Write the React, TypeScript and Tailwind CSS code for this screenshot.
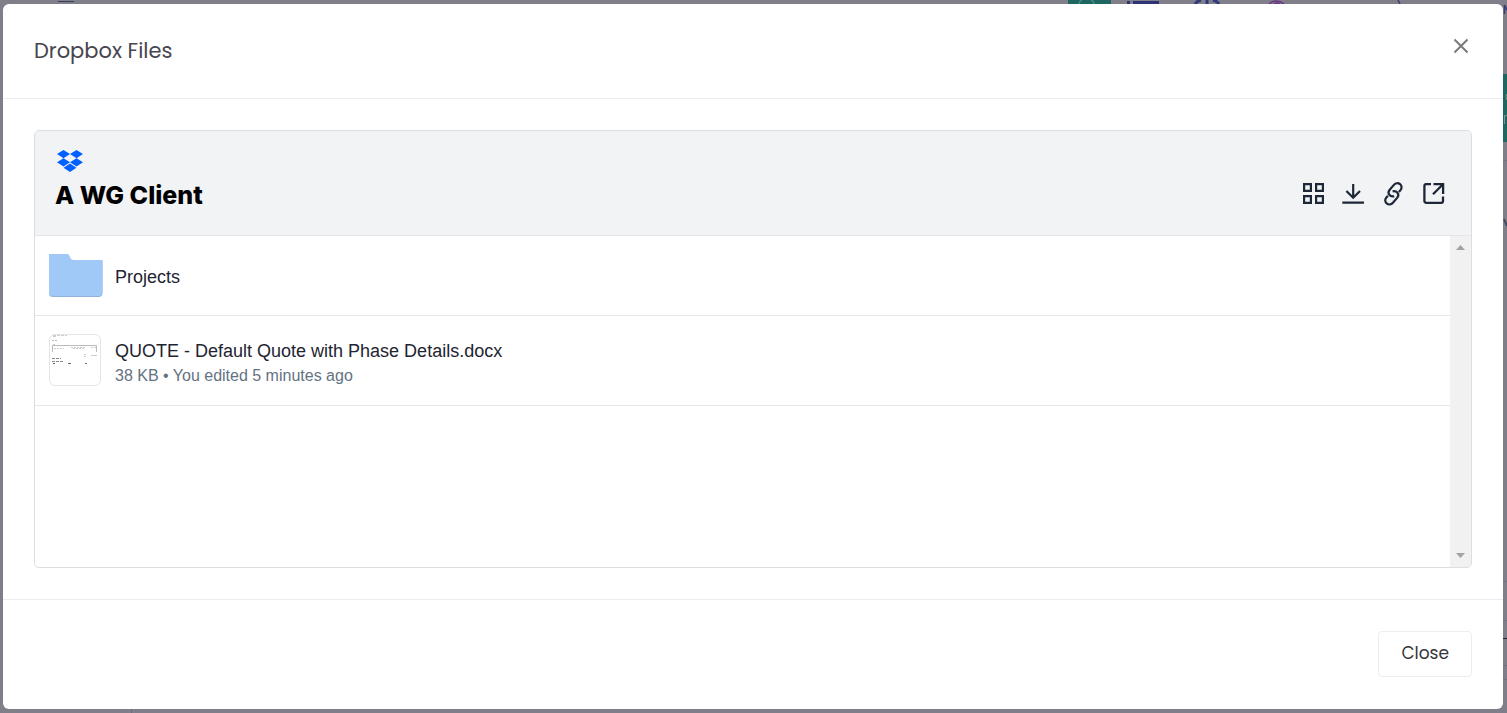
import React from "react";

function DropboxLogo() {
  return (
    <svg width="26" height="22" viewBox="0 0 26 22" fill="#0061fe" aria-hidden="true">
      <path d="M6.5 0 13 4.1 6.5 8.2 0 4.1zM19.5 0 26 4.1l-6.5 4.1L13 4.1zM6.5 8.2l6.5 4.1-6.5 4.1L0 12.300zM19.5 8.2l6.5 4.1-6.5 4.100-6.5-4.100zM13 13.600l6.500 4.200L13 22l-6.500-4.200z" />
    </svg>
  );
}

function GridIcon() {
  return (
    <svg width="32" height="32" viewBox="0 0 32 32" fill="none" stroke="#1e2738" strokeWidth="2.2" aria-hidden="true">
      <path d="M7.100 6.100h6.800v6.800H7.100zM19.100 6.100h6.800v6.800h-6.800zM7.100 18.100h6.800v6.800H7.100zM19.100 18.100h6.800v6.800h-6.800z" />
    </svg>
  );
}

function DownloadIcon() {
  return (
    <svg width="32" height="32" viewBox="0 0 32 32" fill="none" stroke="#1e2738" strokeWidth="2.2" aria-hidden="true">
      <path d="M16.200 6v14M9.400 13l6.800 6.800L23 13M5.300 24.600h21.700" />
    </svg>
  );
}

function LinkIcon() {
  return (
    <svg width="32" height="32" viewBox="0 0 32 32" fill="none" stroke="#1e2738" strokeWidth="2.2" aria-hidden="true">
      <path d="M17.200 18.300c-2 .4-3.800-.1-4.900-1.500-1.200-1.600-1-3.500.4-5.100l4.200-4.800c1.700-2 4.400-2.200 6.200-.7s2 4.100.3 6l-1.500 1.700" />
      <path d="M15.600 13.300c2-.4 3.800.1 4.900 1.500 1.200 1.600 1 3.500-.4 5.100l-4.200 4.800c-1.700 2-4.400 2.200-6.200.7s-2-4.100-.3-6l1.500-1.700" />
    </svg>
  );
}

function OpenIcon() {
  return (
    <svg width="32" height="32" viewBox="0 0 32 32" fill="none" stroke="#1e2738" strokeWidth="2.3" aria-hidden="true">
      <path d="M14 6.200H9.200a1.800 1.800 0 0 0-1.800 1.800v15a1.800 1.800 0 0 0 1.800 1.800h15a1.800 1.800 0 0 0 1.800-1.800v-4.500M16.500 6.200h9.600v9.800M25.800 6.500l-9.800 9.800" />
    </svg>
  );
}

function FolderIcon() {
  return (
    <svg width="54" height="43" viewBox="0 0 54 43" aria-hidden="true">
      <path d="M0 1h18.500c1 0 1.500 1 2 2.200C21.500 5.500 22.500 7 25 7h28.500v32a4 4 0 0 1-4 4H4a4 4 0 0 1-4-4z" fill="#8fb3da" />
      <path d="M0 0h18.500c1 0 1.500 1 2 2.200C21.500 4.500 22.500 6 25 6h28.500v32a4 4 0 0 1-4 4H4a4 4 0 0 1-4-4z" fill="#a1c9f7" />
    </svg>
  );
}

function Thumbnail() {
  return (
    <svg width="50" height="50" viewBox="0 0 50 50" fill="none" aria-hidden="true">
      <path d="M3 .5h14M3 1.500h3" stroke="#ccc" strokeDasharray="3 1" />
      <path d="M2 5.500h5" stroke="#bbb" strokeDasharray="2 1" />
      <path d="M2.500 17v-6.500h44V17" stroke="#bbb" />
      <path d="M3 9.500h2M4 13.500h10M21 12.500h15M23 13.500h12M41 12.500h5" stroke="#ccc" strokeDasharray="2 1" />
      <path d="M34 19.500h2M34 21.500h2M41 20.500h6" stroke="#ccc" />
      <path d="M2 23.500h9M2 26.500h11" stroke="#888" strokeDasharray="3 1" />
      <path d="M3 28.500h2M18 28.500h3M35 28.500h2" stroke="#666" />
    </svg>
  );
}

function BackgroundPage() {
  return (
    <div className="absolute inset-0 overflow-hidden bg-[#807e88]" aria-hidden="true">
      <div className="absolute left-[58px] top-px h-px w-4 bg-[#34405c]" />
      <svg className="absolute right-0 top-0" width="440" height="4" viewBox="1067 0 440 4" fill="none">
        <path d="M1068 0h43v4h-43z" fill="#1e6660" />
        <path d="M1079 4q0-3 3-4M1094 4q0-3-3-4" stroke="#4b8580" strokeWidth="1.500" />
        <path d="M1127 2.500h3M1133 2.500h26" stroke="#2b3476" strokeWidth="3" />
        <path d="M1195 4q2-3 6-4M1207 0v4M1213 0q4 1 6 4" stroke="#2f397c" strokeWidth="3" />
        <path d="M1269 4q7-6 15 0M1274 4q3-2 6 0" stroke="#673487" strokeWidth="1.500" />
        <path d="M1398 0l2 4" stroke="#39417d" strokeWidth="1.500" />
      </svg>
      <svg className="absolute right-0 top-0" width="4" height="713" viewBox="0 0 4 713" fill="none">
        <path d="M0 74h4v68H0z" fill="#1e6660" />
        <path d="M4 94q-2 2 0 6M1.500 115v9M1.500 117q1-2 3-2" stroke="#7e9794" />
        <path d="M1.500 5v9M1.500 5l3 6" stroke="#343b74" strokeWidth="1.500" />
        <path d="M0 160.500h4M0 581.500h4M0 620.500h4M0 665.500h4M0 679.500h4" stroke="#73717f" />
        <path d="M1 219l3 7" stroke="#424b5f" strokeWidth="2" />
        <path d="M0 638.500h4" stroke="#252432" />
      </svg>
      <div className="absolute bottom-0 left-[131px] h-1 w-px bg-[#6e6b80]" />
    </div>
  );
}

const actions = [
  { label: "Grid view", icon: <GridIcon /> },
  { label: "Download", icon: <DownloadIcon /> },
  { label: "Copy link", icon: <LinkIcon /> },
  { label: "Open in Dropbox", icon: <OpenIcon /> },
];

export default function App() {
  return (
    <div className="relative flex min-h-screen py-1 pl-[3px] pr-1">
      <BackgroundPage />
      <div
        role="dialog"
        aria-labelledby="dialog-title"
        className="relative flex flex-1 flex-col rounded-md bg-white font-['Poppins','Open_Sans',sans-serif]"
      >
        <header className="flex items-start justify-between border-b border-[#ebecf0] px-[31px] pb-8 pt-7">
          <h1 id="dialog-title" className="pt-1 text-[21px] leading-[30px] text-[#47464f]">
            Dropbox Files
          </h1>
          <button type="button" aria-label="Dismiss" className="p-1 text-[#7b7b7b]">
            <svg width="14" height="20" viewBox="0 0 14 20" fill="none" stroke="currentColor" strokeWidth="2" aria-hidden="true">
              <path d="M.5 3.500l13 13M13.500 3.500l-13 13" />
            </svg>
          </button>
        </header>

        <main className="flex flex-1 flex-col p-[31px]">
          <section className="flex flex-1 flex-col overflow-hidden rounded-[5px] border border-[#dcdee1] font-['Liberation_Sans',sans-serif]">
            <div className="flex items-end justify-between border-b border-[#e3e5e8] bg-[#f2f3f5] pb-6 pl-5 pr-[22px] pt-[19px]">
              <div>
                <div className="pl-0.5">
                  <DropboxLogo />
                </div>
                <h2 className="mt-[7px] font-['Inter',sans-serif] text-[25px] font-extrabold leading-8 text-black">
                  A WG Client
                </h2>
              </div>
              <div className="flex gap-2 pb-px">
                {actions.map((action) => (
                  <button key={action.label} type="button" aria-label={action.label}>
                    {action.icon}
                  </button>
                ))}
              </div>
            </div>

            <div className="flex flex-1">
              <ul className="flex-1">
                <li className="flex h-20 items-center border-b border-[#e5e7ea] px-3.5">
                  <FolderIcon />
                  <a href="#projects" className="ml-3 pt-0.5 text-lg text-[#1e2430]">
                    Projects
                  </a>
                </li>
                <li className="flex h-[90px] items-start border-b border-[#e5e7ea] px-3.5 pt-[18px]">
                  <div className="rounded-md border border-[#e4e5e7]">
                    <Thumbnail />
                  </div>
                  <div className="ml-3.5 pt-[3px]">
                    <a href="#quote" className="block text-lg leading-7 text-[#1e2430]">
                      QUOTE - Default Quote with Phase Details.docx
                    </a>
                    <p className="text-base leading-[22px] text-[#637282]">38 KB • You edited 5 minutes ago</p>
                  </div>
                </li>
              </ul>
              <div className="flex w-[21px] flex-col items-center justify-between bg-[#f1f1f1] py-[9px]" aria-hidden="true">
                <svg width="9" height="5" viewBox="0 0 9 5" fill="#a3a3a3">
                  <path d="M0 5 4.500 0 9 5z" />
                </svg>
                <svg width="9" height="5" viewBox="0 0 9 5" fill="#a3a3a3">
                  <path d="M0 0h9L4.500 5z" />
                </svg>
              </div>
            </div>
          </section>
        </main>

        <footer className="flex justify-end border-t border-[#ebecf0] px-[31px] pb-8 pt-[31px]">
          <button
            type="button"
            className="rounded border border-[#ebedf2] px-[22px] pb-[11px] pt-[9px] text-[17px] leading-6 text-[#36363a]"
          >
            Close
          </button>
        </footer>
      </div>
    </div>
  );
}
